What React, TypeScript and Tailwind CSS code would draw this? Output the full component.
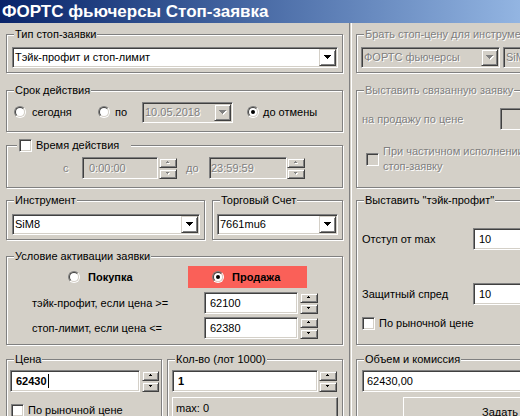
import React from 'react'

// classic win32 bevels
const sunken =
  'border border-t-[#808080] border-l-[#808080] border-r-white border-b-white shadow-[inset_1px_1px_0_#404040,inset_-1px_-1px_0_#d4d0c8]'
const raised =
  'border border-t-[#d4d0c8] border-l-[#d4d0c8] border-r-[#404040] border-b-[#404040] shadow-[inset_1px_1px_0_#fff,inset_-1px_-1px_0_#808080]'
const etched = 'border border-[#808080] shadow-[inset_1px_1px_0_#fff,1px_1px_0_#fff]'
const dim = 'text-[#808080] [text-shadow:1px_1px_0_#fff]'

function Arrow({ up, small, disabled }: { up?: boolean; small?: boolean; disabled?: boolean }) {
  const d = small
    ? up
      ? 'M1 0h1v1H1zM0 1h3v1H0z'
      : 'M0 0h3v1H0zM1 1h1v1H1z'
    : 'M0 0h7v1H0zM1 1h5v1H1zM2 2h3v1H2zM3 3h1v1H3z'
  const w = small ? 3 : 7
  const h = small ? 2 : 4
  return (
    <svg width={w + 1} height={h + 1} viewBox={`0 0 ${w + 1} ${h + 1}`} shapeRendering="crispEdges">
      {disabled && <path d={d} fill="#fff" transform="translate(1 1)" />}
      <path d={d} fill={disabled ? '#808080' : '#000'} />
    </svg>
  )
}

function Combo({ text, className, disabled }: { text: string; className: string; disabled?: boolean }) {
  return (
    <div className={`flex h-[21px] shrink-0 ${sunken} ${disabled ? 'bg-[#d4d0c8]' : 'bg-white'} ${className}`}>
      <div className={`flex flex-1 items-center overflow-hidden whitespace-nowrap pl-[2px] ${disabled ? dim : ''}`}>
        {text}
      </div>
      <div className={`m-[1px] flex w-[17px] shrink-0 items-center justify-center ${raised}`}>
        <Arrow disabled={disabled} />
      </div>
    </div>
  )
}

function Field({
  children,
  className,
  disabled,
  bold,
}: {
  children?: React.ReactNode
  className: string
  disabled?: boolean
  bold?: boolean
}) {
  return (
    <div
      className={`flex shrink-0 items-center whitespace-nowrap ${sunken} ${disabled ? 'bg-[#d4d0c8] ' + dim : 'bg-white'} ${bold ? 'font-bold' : ''} ${className}`}
    >
      {children}
    </div>
  )
}

function Spinner({ className, disabled }: { className: string; disabled?: boolean }) {
  return (
    <div className={`flex shrink-0 flex-col gap-[1px] ${className}`}>
      <div className={`flex h-[10px] items-center justify-center ${raised}`}>
        <Arrow up small disabled={disabled} />
      </div>
      <div className={`flex h-[10px] items-center justify-center ${raised}`}>
        <Arrow small disabled={disabled} />
      </div>
    </div>
  )
}

function Radio({ checked }: { checked?: boolean }) {
  return (
    <div className="h-[12px] w-[12px] shrink-0 rounded-full border border-t-[#808080] border-l-[#808080] border-r-white border-b-white">
      <div className="flex h-full w-full items-center justify-center rounded-full border border-t-[#404040] border-l-[#404040] border-r-[#d4d0c8] border-b-[#d4d0c8] bg-white">
        {checked && <div className="h-[4px] w-[4px] rounded-full bg-black" />}
      </div>
    </div>
  )
}

function Check({ disabled }: { disabled?: boolean }) {
  return <div className={`h-[13px] w-[13px] shrink-0 ${sunken} ${disabled ? 'bg-[#d4d0c8]' : 'bg-white'}`} />
}

function Group({
  legend,
  className,
  children,
  legendClassName = 'left-[7px] px-[1px]',
}: {
  legend: React.ReactNode
  className: string
  children?: React.ReactNode
  legendClassName?: string
}) {
  return (
    <div className={`relative shrink-0 ${etched} ${className}`}>
      <div
        className={`absolute top-[-7px] flex h-[13px] items-center whitespace-nowrap bg-[#d4d0c8] leading-[13px] ${legendClassName}`}
      >
        {legend}
      </div>
      {children}
    </div>
  )
}

export default function App() {
  return (
    <div className="h-[416px] w-[520px] overflow-hidden bg-[#d4d0c8] font-['Liberation_Sans',Arial,sans-serif] text-[11px] leading-[13px] text-black">
      <div className="flex h-[23px] items-center whitespace-nowrap bg-linear-to-r from-[#0a246a] to-[#93b5e2] pl-[2px] text-[17px] font-bold text-white">
        ФОРТС фьючерсы Стоп-заявка
      </div>

      <div className="flex h-[393px]">
        {/* left column */}
        <div className="w-[349px] shrink-0 pl-[6px]">
          <Group legend="Тип стоп-заявки" className="mt-[11px] h-[39px] w-[337px] pl-[5px] pt-[12px]">
            <Combo text="Тэйк-профит и стоп-лимит" className="w-[326px]" />
          </Group>

          <Group legend="Срок действия" className="mt-[17px] h-[42px] w-[337px] pl-[7px] pt-[10px]">
            <div className="flex h-[22px] items-center">
              <div className="flex w-[84px] shrink-0 items-center">
                <Radio />
                <span className="ml-[6px]">сегодня</span>
              </div>
              <div className="flex w-[44px] shrink-0 items-center">
                <Radio />
                <span className="ml-[5px]">по</span>
              </div>
              <Combo disabled text="10.05.2018" className="w-[91px]" />
              <div className="ml-[14px] flex items-center">
                <Radio checked />
                <span className="ml-[4px]">до отмены</span>
              </div>
            </div>
          </Group>

          <Group
            legend={
              <>
                <Check />
                <span className="ml-[4px]">Время действия</span>
              </>
            }
            legendClassName="left-[10px] pl-[2px] pr-[12px]"
            className="mt-[13px] h-[43px] w-[337px] pl-[56px] pt-[11px]"
          >
            <div className="flex h-[22px] items-center">
              <span className={`w-[19px] shrink-0 ${dim}`}>с</span>
              <Field disabled className="h-[22px] w-[76px] pl-[6px]">
                0:00:00
              </Field>
              <Spinner disabled className="ml-[1px] w-[18px]" />
              <span className={`ml-[9px] w-[23px] shrink-0 ${dim}`}>до</span>
              <Field disabled className="h-[22px] w-[78px] pl-[1px]">
                23:59:59
              </Field>
              <Spinner disabled className="w-[18px]" />
            </div>
          </Group>

          <div className="mt-[12px] flex">
            <Group legend="Инструмент" className="h-[40px] w-[199px] pl-[5px] pt-[13px]">
              <Combo text="SiM8" className="w-[188px]" />
            </Group>
            <Group legend="Торговый Счет" className="ml-[7px] h-[40px] w-[131px] pl-[4px] pt-[13px]">
              <Combo text="7661mu6" className="w-[121px]" />
            </Group>
          </div>

          <Group legend="Условие активации заявки" className="mt-[16px] h-[89px] w-[337px] pl-[7px] pt-[9px]">
            <div className="flex h-[22px]">
              <div className="ml-[54px] flex w-[120px] shrink-0 items-center">
                <Radio />
                <span className="ml-[8px] font-bold">Покупка</span>
              </div>
              <div className="flex w-[119px] shrink-0 items-center bg-[#fa6058] pl-[24px]">
                <Radio checked />
                <span className="ml-[8px] font-bold">Продажа</span>
              </div>
            </div>
            <div className="mt-[4px] flex h-[22px] items-center">
              <span className="ml-[18px] w-[172px] shrink-0">тэйк-профит, если цена &gt;=</span>
              <Field className="h-[22px] w-[94px] pl-[5px]">62100</Field>
              <Spinner className="ml-[2px] w-[18px]" />
            </div>
            <div className="mt-[3px] flex h-[22px] items-center">
              <span className="ml-[18px] w-[172px] shrink-0">стоп-лимит, если цена &lt;=</span>
              <Field className="h-[22px] w-[94px] pl-[5px]">62380</Field>
              <Spinner className="ml-[2px] w-[18px]" />
            </div>
          </Group>

          <div className="mt-[14px] flex">
            <Group legend="Цена" className="h-[60px] w-[156px] pl-[3px] pt-[10px]">
              <div className="flex items-center">
                <Field bold className="h-[22px] w-[130px] pl-[5px]">
                  62430
                  <span className="ml-[1px] inline-block h-[14px] w-[1px] bg-black" />
                </Field>
                <Spinner className="ml-[2px] w-[17px]" />
              </div>
              <div className="mt-[12px] flex items-center pl-[1px]">
                <Check />
                <span className="ml-[4px]">По рыночной цене</span>
              </div>
            </Group>
            <Group legend="Кол-во (лот 1000)" className="ml-[5px] h-[60px] w-[176px] pl-[4px] pt-[10px]">
              <div className="flex items-center">
                <Field bold className="h-[22px] w-[146px] pl-[5px]">
                  1
                </Field>
                <Spinner className="ml-[1px] w-[18px]" />
              </div>
              <div className="mt-[5px] h-[30px] w-[166px] border border-t-white border-l-white border-r-[#404040] border-b-[#404040] pl-[3px] pt-[4px] shadow-[inset_-1px_-1px_0_#808080]">
                max: 0
              </div>
            </Group>
          </div>
        </div>

        <div className="w-[3px] shrink-0 border-l border-r border-l-[#808080] border-r-white" />

        {/* right column */}
        <div className="w-[204px] shrink-0 pl-[4px]">
          <Group
            legend={<span className={dim}>Брать стоп-цену для инструмента</span>}
            className="mt-[11px] h-[39px] w-[200px] pl-[4px] pt-[12px]"
          >
            <div className="flex">
              <Combo disabled text="ФОРТС фьючерсы" className="w-[139px]" />
              <Combo disabled text="SiM8" className="ml-[3px] w-[60px]" />
            </div>
          </Group>

          <Group
            legend={<span className={dim}>Выставить связанную заявку</span>}
            className="mt-[17px] h-[98px] w-[200px] pl-[5px] pt-[17px]"
          >
            <div className="flex h-[22px] items-center">
              <span className={`w-[138px] shrink-0 ${dim}`}>на продажу по цене</span>
              <Field disabled className="h-[22px] w-[60px]" />
            </div>
            <div className="mt-[14px] flex items-center pl-[4px]">
              <Check disabled />
              <span className={`ml-[4px] shrink-0 whitespace-nowrap leading-[15px] ${dim}`}>
                При частичном исполнении заявки
                <br />
                стоп-заявку
              </span>
            </div>
          </Group>

          <Group legend='Выставить "тэйк-профит"' className="mt-[12px] h-[145px] w-[200px] pl-[5px] pt-[27px]">
            <div className="flex h-[22px] items-center">
              <span className="w-[111px] shrink-0">Отступ от max</span>
              <Field className="h-[22px] w-[100px] pl-[5px]">10</Field>
            </div>
            <div className="mt-[33px] flex h-[22px] items-center">
              <span className="w-[111px] shrink-0">Защитный спред</span>
              <Field className="h-[22px] w-[100px] pl-[5px]">10</Field>
            </div>
            <div className="mt-[12px] flex items-center">
              <Check />
              <span className="ml-[4px]">По рыночной цене</span>
            </div>
          </Group>

          <Group legend="Объем и комиссия" className="mt-[14px] h-[70px] w-[200px] pl-[5px] pt-[10px]">
            <Field className="h-[22px] w-[190px] pl-[4px]">62430,00</Field>
            <div className="ml-[41px] mt-[5px] flex h-[30px] w-[194px] shrink-0 items-center justify-center border border-t-white border-l-white border-r-[#404040] border-b-[#404040] shadow-[inset_-1px_-1px_0_#808080]">
              Задать
            </div>
          </Group>
        </div>
      </div>
    </div>
  )
}
